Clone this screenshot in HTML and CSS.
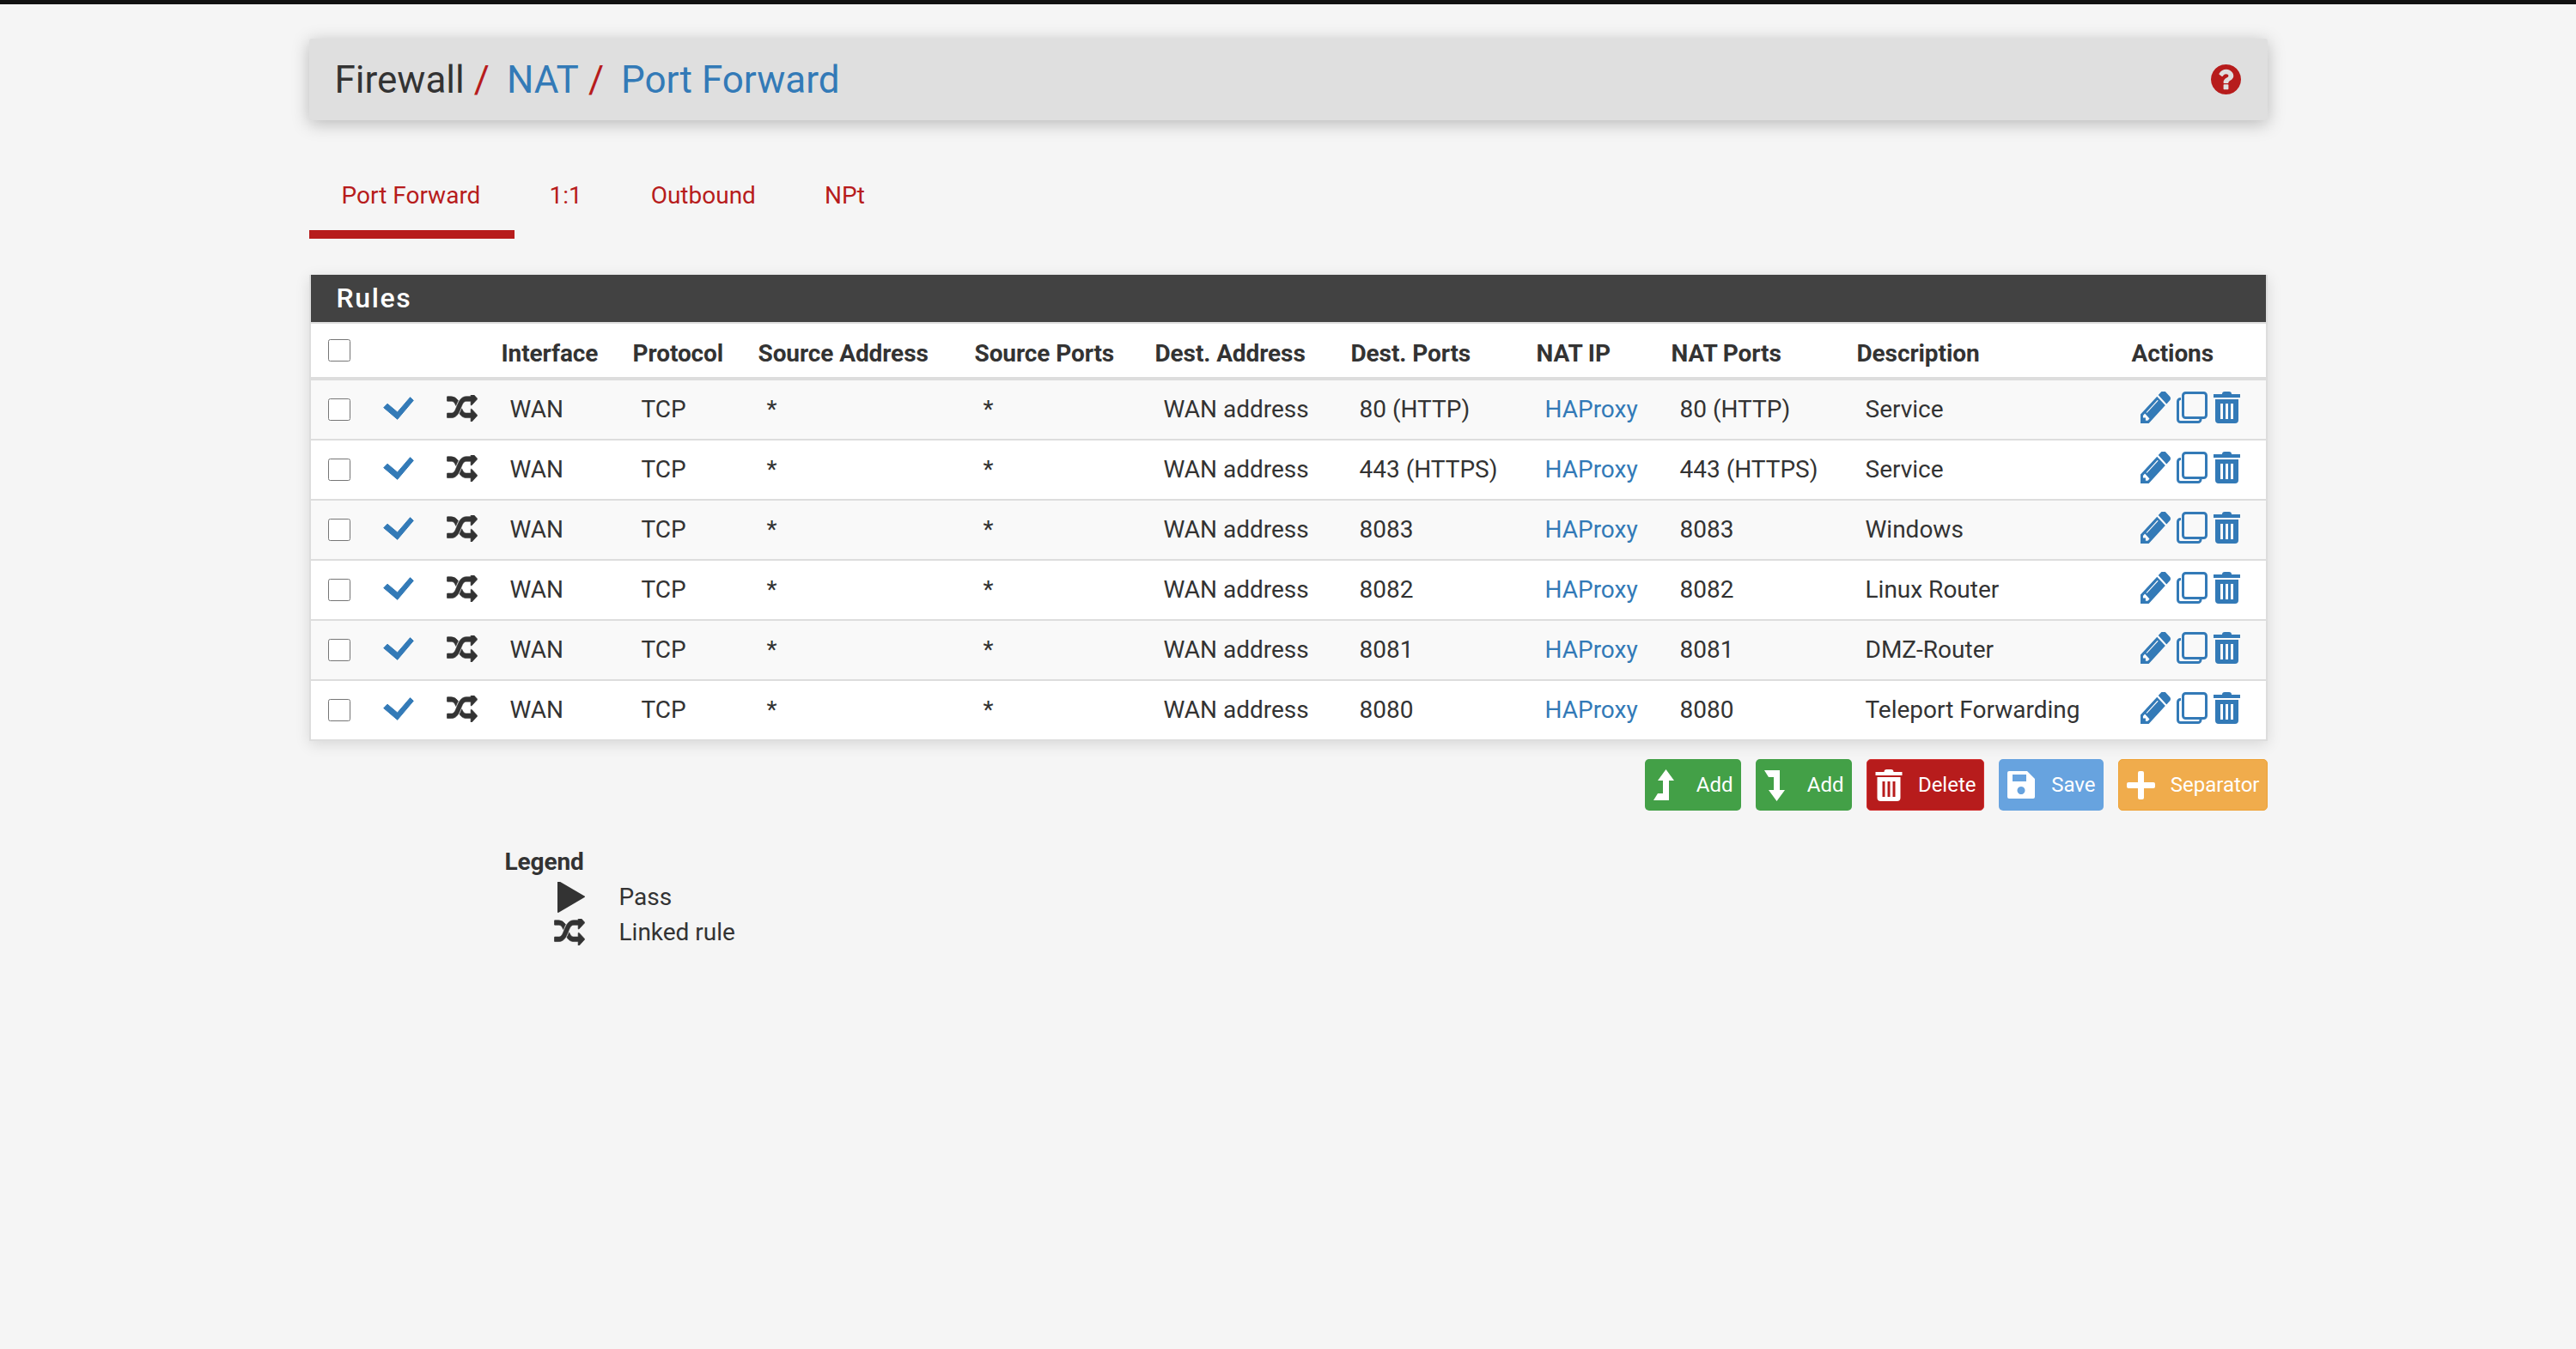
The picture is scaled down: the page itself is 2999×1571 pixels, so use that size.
FILE: index.html
```html
<!DOCTYPE html>
<html lang="en">
<head>
    <meta charset="UTF-8">
    <title>Firewall / NAT / Port Forward</title>
    <link rel="stylesheet" href="styles.css">
</head>
<body>
<svg class="defs" xmlns="http://www.w3.org/2000/svg">
    <symbol id="i-check" viewBox="0 0 36 27"><path stroke="currentColor" stroke-width="1" stroke-linejoin="round" d="M.7 12.700L5 8.200L16.700 18L31.500 .7L35.300 4.300L16.700 26.300z"/></symbol>
    <symbol id="i-shuffle" viewBox="-15 177 1822 1438" preserveAspectRatio="none"><path stroke="currentColor" stroke-width="30" d="M666 481q-60 92-137 273-22-45-37-72.500t-40.500-63.500-51-56.500-63-35-81.500-14.500h-224q-14 0-23-9t-9-23v-192q0-14 9-23t23-9h224q250 0 410 225zm1126 799q0 14-9 23l-320 320q-9 9-23 9-13 0-22.500-9.500t-9.500-22.500v-192q-32 0-85 .5t-81 1-73-1-71-5-64-10.500-63-18.500-58-28.500-59-40-55-53.500-56-69.500q59-93 136-273 22 45 37 72.500t40.500 63.500 51 56.500 63 35 81.500 14.500h256v-192q0-14 9-23t23-9q12 0 24 10l319 319q9 9 9 23zm0-896q0 14-9 23l-320 320q-9 9-23 9-13 0-22.500-9.500t-9.500-22.500v-192h-256q-48 0-87 15t-69 45-51 61.500-45 77.500q-32 62-78 171-29 66-49.500 111t-54 105-64 100-74 83-90 68.500-106.500 42-128 16.500h-224q-14 0-23-9t-9-23v-192q0-14 9-23t23-9h224q48 0 87-15t69-45 51-61.500 45-77.500q32-62 78-171 29-66 49.500-111t54-105 64-100 74-83 90-68.500 106.500-42 128-16.500h256v-192q0-14 9-23t23-9q12 0 24 10l319 319q9 9 9 23z"/></symbol>
    <symbol id="i-pencil" viewBox="128 192 1515 1472" preserveAspectRatio="none"><path d="M491 1536l91-91-235-235-91 91v107h128v128h107zm523-928q0-22-22-22-10 0-17 7l-542 542q-7 7-7 17 0 22 22 22 10 0 17-7l542-542q7-7 7-17zm-54-192l416 416-832 832h-416v-416zm683 96q0 53-37 90l-166 166-416-416 166-165q36-38 90-38 53 0 91 38l235 234q37 39 37 91z"/></symbol>
    <symbol id="i-clone" viewBox="0 0 36 37"><rect x="7.500" y="1.500" width="27" height="29" rx="3" fill="none" stroke="currentColor" stroke-width="3"/><path d="M5 8.500H4.500a3 3 0 0 0-3 3V32.500a3 3 0 0 0 3 3H25a3 3 0 0 0 3-3V32" fill="none" stroke="currentColor" stroke-width="3"/></symbol>
    <symbol id="i-trash" viewBox="0 0 31 37"><path fill-rule="evenodd" d="M10 3Q10 0 13 0H18Q21 0 21 3H31V7H0V3zM2 9H29V33Q29 37 25 37H6Q2 37 2 33zM8 14V32H11V14zM14 14V32H17V14zM20 14V32H23V14z"/></symbol>
    <symbol id="i-help" viewBox="128 128 1536 1536"><path d="M1024 1376v-192q0-14-9-23t-23-9h-192q-14 0-23 9t-9 23v192q0 14 9 23t23 9h192q14 0 23-9t9-23zm256-672q0-88-55.500-163t-138.500-116-170-41q-243 0-371 213-15 24 8 42l132 100q7 6 19 6 16 0 25-12 53-68 86-92 34-24 86-24 48 0 85.500 26t37.500 59q0 38-20 61t-68 45q-63 28-115.500 86.500t-52.500 125.500v36q0 14 9 23t23 9h192q14 0 23-9t9-23q0-19 21.500-49.500t54.500-49.500q32-18 49-28.500t46-35 44.500-48 28-60.500 12.500-81zm384 192q0 209-103 385.500t-279.500 279.500-385.500 103-385.500-103-279.500-279.500-103-385.500 103-385.500 279.500-279.500 385.500-103 385.500 103 279.500 279.500 103 385.500z"/></symbol>
    <symbol id="i-play" viewBox="192 176 1407 1500" preserveAspectRatio="none"><path d="M1576 927l-1328 738q-23 13-39.500 3t-16.500-36v-1472q0-26 16.500-36t39.500 3l1328 738q23 13 23 31t-23 31z"/></symbol>
    <symbol id="i-up" viewBox="0 0 24 37"><path d="M14.500 0L24 13H18V36H0L5 28H11V13H5z"/></symbol>
    <symbol id="i-down" viewBox="0 0 24 37"><path d="M0 1H18V24H24L14.500 37L5 24H11V9H5z"/></symbol>
    <symbol id="i-save" viewBox="0 0 32 32"><path fill-rule="evenodd" d="M2 0H23L32 9V30a2 2 0 0 1-2 2H2a2 2 0 0 1-2-2V2a2 2 0 0 1 2-2zM6 4V12H22V4zM16 18a4.500 4.500 0 1 0 .01 0z"/></symbol>
    <symbol id="i-plus" viewBox="0 0 33 33"><path d="M13 2a2 2 0 0 1 2-2h3a2 2 0 0 1 2 2V13H31a2 2 0 0 1 2 2v3a2 2 0 0 1-2 2H20V31a2 2 0 0 1-2 2H15a2 2 0 0 1-2-2V20H2a2 2 0 0 1-2-2V15a2 2 0 0 1 2-2H13z"/></symbol>
</svg>

<div class="container">
    <div class="page-head">
        <h1 class="crumbs">
            <span>Firewall</span><span class="sep">/</span><a href="#">NAT</a><span class="sep">/</span><a href="#">Port Forward</a>
        </h1>
        <a href="#" class="help"><svg><use href="#i-help"/></svg></a>
    </div>

    <ul class="tabs">
        <li class="active"><a href="#">Port Forward</a></li>
        <li><a href="#">1:1</a></li>
        <li><a href="#">Outbound</a></li>
        <li><a href="#">NPt</a></li>
    </ul>

    <div class="panel">
        <h2 class="panel-title">Rules</h2>
        <table class="rules">
            <colgroup>
                <col class="c-sel"><col class="c-state"><col class="c-link">
                <col class="c-if"><col class="c-proto"><col class="c-saddr"><col class="c-sport">
                <col class="c-daddr"><col class="c-dport"><col class="c-nat"><col class="c-nport">
                <col class="c-desc"><col class="c-act">
            </colgroup>
            <thead>
                <tr>
                    <th class="sel"><input type="checkbox" class="box"></th>
                    <th></th>
                    <th></th>
                    <th>Interface</th>
                    <th>Protocol</th>
                    <th>Source Address</th>
                    <th>Source Ports</th>
                    <th>Dest. Address</th>
                    <th>Dest. Ports</th>
                    <th>NAT IP</th>
                    <th>NAT Ports</th>
                    <th>Description</th>
                    <th>Actions</th>
                </tr>
            </thead>
            <tbody>
                <tr>
                    <td class="sel"><input type="checkbox" class="box"></td>
                    <td class="ic"><svg class="i-check"><use href="#i-check"/></svg></td>
                    <td class="ic"><svg class="i-shuffle"><use href="#i-shuffle"/></svg></td>
                    <td>WAN</td><td>TCP</td><td>*</td><td>*</td><td>WAN address</td><td>80 (HTTP)</td>
                    <td><a href="#">HAProxy</a></td><td>80 (HTTP)</td><td>Service</td>
                    <td class="acts"><div class="acts-in"><svg class="i-pencil"><use href="#i-pencil"/></svg><svg class="i-clone"><use href="#i-clone"/></svg><svg class="i-trash"><use href="#i-trash"/></svg></div></td>
                </tr>
                <tr>
                    <td class="sel"><input type="checkbox" class="box"></td>
                    <td class="ic"><svg class="i-check"><use href="#i-check"/></svg></td>
                    <td class="ic"><svg class="i-shuffle"><use href="#i-shuffle"/></svg></td>
                    <td>WAN</td><td>TCP</td><td>*</td><td>*</td><td>WAN address</td><td>443 (HTTPS)</td>
                    <td><a href="#">HAProxy</a></td><td>443 (HTTPS)</td><td>Service</td>
                    <td class="acts"><div class="acts-in"><svg class="i-pencil"><use href="#i-pencil"/></svg><svg class="i-clone"><use href="#i-clone"/></svg><svg class="i-trash"><use href="#i-trash"/></svg></div></td>
                </tr>
                <tr>
                    <td class="sel"><input type="checkbox" class="box"></td>
                    <td class="ic"><svg class="i-check"><use href="#i-check"/></svg></td>
                    <td class="ic"><svg class="i-shuffle"><use href="#i-shuffle"/></svg></td>
                    <td>WAN</td><td>TCP</td><td>*</td><td>*</td><td>WAN address</td><td>8083</td>
                    <td><a href="#">HAProxy</a></td><td>8083</td><td>Windows</td>
                    <td class="acts"><div class="acts-in"><svg class="i-pencil"><use href="#i-pencil"/></svg><svg class="i-clone"><use href="#i-clone"/></svg><svg class="i-trash"><use href="#i-trash"/></svg></div></td>
                </tr>
                <tr>
                    <td class="sel"><input type="checkbox" class="box"></td>
                    <td class="ic"><svg class="i-check"><use href="#i-check"/></svg></td>
                    <td class="ic"><svg class="i-shuffle"><use href="#i-shuffle"/></svg></td>
                    <td>WAN</td><td>TCP</td><td>*</td><td>*</td><td>WAN address</td><td>8082</td>
                    <td><a href="#">HAProxy</a></td><td>8082</td><td>Linux Router</td>
                    <td class="acts"><div class="acts-in"><svg class="i-pencil"><use href="#i-pencil"/></svg><svg class="i-clone"><use href="#i-clone"/></svg><svg class="i-trash"><use href="#i-trash"/></svg></div></td>
                </tr>
                <tr>
                    <td class="sel"><input type="checkbox" class="box"></td>
                    <td class="ic"><svg class="i-check"><use href="#i-check"/></svg></td>
                    <td class="ic"><svg class="i-shuffle"><use href="#i-shuffle"/></svg></td>
                    <td>WAN</td><td>TCP</td><td>*</td><td>*</td><td>WAN address</td><td>8081</td>
                    <td><a href="#">HAProxy</a></td><td>8081</td><td>DMZ-Router</td>
                    <td class="acts"><div class="acts-in"><svg class="i-pencil"><use href="#i-pencil"/></svg><svg class="i-clone"><use href="#i-clone"/></svg><svg class="i-trash"><use href="#i-trash"/></svg></div></td>
                </tr>
                <tr>
                    <td class="sel"><input type="checkbox" class="box"></td>
                    <td class="ic"><svg class="i-check"><use href="#i-check"/></svg></td>
                    <td class="ic"><svg class="i-shuffle"><use href="#i-shuffle"/></svg></td>
                    <td>WAN</td><td>TCP</td><td>*</td><td>*</td><td>WAN address</td><td>8080</td>
                    <td><a href="#">HAProxy</a></td><td>8080</td><td>Teleport Forwarding</td>
                    <td class="acts"><div class="acts-in"><svg class="i-pencil"><use href="#i-pencil"/></svg><svg class="i-clone"><use href="#i-clone"/></svg><svg class="i-trash"><use href="#i-trash"/></svg></div></td>
                </tr>
            </tbody>
        </table>
    </div>

    <div class="buttons">
        <a href="#" class="btn green b-add"><svg class="i-arrow"><use href="#i-up"/></svg>Add</a>
        <a href="#" class="btn green b-add"><svg class="i-arrow"><use href="#i-down"/></svg>Add</a>
        <a href="#" class="btn red b-del"><svg class="i-del"><use href="#i-trash"/></svg>Delete</a>
        <a href="#" class="btn blue b-save"><svg class="i-save"><use href="#i-save"/></svg>Save</a>
        <a href="#" class="btn orange b-sep"><svg class="i-plus"><use href="#i-plus"/></svg>Separator</a>
    </div>

    <div class="legend">
        <div class="legend-title">Legend</div>
        <div class="legend-row"><span class="legend-ic"><svg class="i-play"><use href="#i-play"/></svg></span>Pass</div>
        <div class="legend-row"><span class="legend-ic"><svg class="i-shuffle"><use href="#i-shuffle"/></svg></span>Linked rule</div>
    </div>
</div>
</body>
</html>
```

FILE: styles.css
```css
body {
    margin: 0;
    min-height: 1566px;
    background: #f5f5f5;
    border-top: 5px solid #111;
    font-family: Roboto, "Liberation Sans", sans-serif;
    font-size: 28px;
    color: #333;
}

a {
    color: #337ab7;
    text-decoration: none;
}

svg {
    fill: currentColor;
    display: block;
}

.defs {
    display: none;
}

.container {
    width: 2280px;
    margin: 0 auto;
}

/* breadcrumb bar */
.page-head {
    display: flex;
    align-items: center;
    justify-content: space-between;
    height: 95px;
    margin-top: 40px;
    padding: 0 31px 0 30px;
    background: #dfdfdf;
    border-radius: 3px;
    box-shadow: 0 4px 20px rgba(0, 0, 0, 0.25);
}

.crumbs {
    margin: 0;
    font-size: 44px;
    font-weight: 400;
    line-height: 1;
}

.sep {
    color: #b71c1c;
    margin: 0 20px 0 11px;
}

.help {
    color: #b71c1c;
}

.help svg {
    width: 35px;
    height: 35px;
}

/* tabs */
.tabs {
    display: flex;
    list-style: none;
    margin: 53px 0 0;
    padding: 0;
}

.tabs li + li {
    margin-left: 2px;
}

.tabs a {
    display: block;
    height: 85px;
    padding: 15px 40px 0 38px;
    box-sizing: border-box;
    color: #b71c1c;
    line-height: 40px;
}

.tabs li.active a {
    border-bottom: 10px solid #b71c1c;
}

/* rules panel */
.panel {
    margin-top: 42px;
    background: #fff;
    border: 2px solid #ddd;
    border-top: none;
    box-shadow: 0 4px 16px rgba(0, 0, 0, 0.12);
}

.panel-title {
    margin: 0;
    height: 55px;
    padding-left: 30px;
    background: #424242;
    color: #fff;
    font-size: 32px;
    font-weight: 500;
    letter-spacing: 1.6px;
    line-height: 55px;
    border-bottom: 2px solid #ddd;
}

.rules {
    width: 100%;
    border-collapse: collapse;
    table-layout: fixed;
}

.c-sel { width: 74px; }
.c-state { width: 74px; }
.c-link { width: 74px; }
.c-if { width: 153px; }
.c-proto { width: 146px; }
.c-saddr { width: 252px; }
.c-sport { width: 210px; }
.c-daddr { width: 228px; }
.c-dport { width: 216px; }
.c-nat { width: 157px; }
.c-nport { width: 216px; }
.c-desc { width: 320px; }
.c-act { width: auto; }

.rules th {
    height: 56px;
    padding: 6px 0 0;
    text-align: left;
    font-weight: 700;
    letter-spacing: -0.1px;
    white-space: nowrap;
    border-bottom: 4px solid #ddd;
}

.rules td {
    height: 65px;
    padding: 1px 0 2px 10px;
    box-sizing: content-box;
    white-space: nowrap;
    border-bottom: 2px solid #ddd;
}

.rules tbody tr:nth-child(odd) {
    background: #f9f9f9;
}

.rules tbody tr:last-child td {
    border-bottom: none;
}

.rules .sel {
    padding: 0 0 0 20px;
}

.box {
    display: block;
    width: 26px;
    height: 26px;
    margin: 0;
}

.rules .ic {
    padding: 0 0 0 10px;
}

.rules td.ic svg {
    margin-top: -4px;
}

.i-check {
    width: 36px;
    height: 27px;
    color: #337ab7;
}

.i-shuffle {
    width: 36px;
    height: 31px;
}

.rules .acts {
    color: #337ab7;
}

.acts-in {
    display: flex;
    gap: 7px;
    align-items: center;
    margin-bottom: 5px;
}

.acts svg {
    height: 37px;
}

.i-pencil {
    width: 35px;
}

.i-clone {
    width: 36px;
}

.i-trash {
    width: 31px;
}

/* bottom buttons */
.buttons {
    display: flex;
    justify-content: flex-end;
    gap: 17px;
    margin-top: 21px;
}

.btn {
    display: flex;
    align-items: center;
    justify-content: space-between;
    height: 60px;
    box-sizing: border-box;
    padding: 0 8px 0 9px;
    border-radius: 5px;
    border: 1px solid transparent;
    color: #fff;
    font-size: 24px;
}

.green {
    background: #43a047;
}

.red {
    background: #b71c1c;
    border-color: #d32f2f;
}

.blue {
    background: #67a3df;
}

.orange {
    background: #f0ac4c;
    border-color: #eea236;
}

.b-add {
    width: 112px;
}

.b-del {
    width: 137px;
}

.b-save {
    width: 122px;
}

.b-sep {
    width: 174px;
}

.i-arrow {
    width: 24px;
    height: 37px;
}

.i-del {
    width: 32px;
    height: 37px;
}

.i-save {
    width: 32px;
    height: 32px;
}

.i-plus {
    width: 33px;
    height: 33px;
}

/* legend */
.legend {
    margin: 40px 0 0 228px;
}

.legend-title {
    font-weight: 700;
    letter-spacing: -0.1px;
    line-height: 40px;
}

.legend-row {
    display: flex;
    align-items: center;
    height: 41px;
}

.legend-ic {
    display: flex;
    justify-content: flex-end;
    width: 93px;
    margin-right: 40px;
}

.i-play {
    width: 32px;
    height: 36px;
}
```
